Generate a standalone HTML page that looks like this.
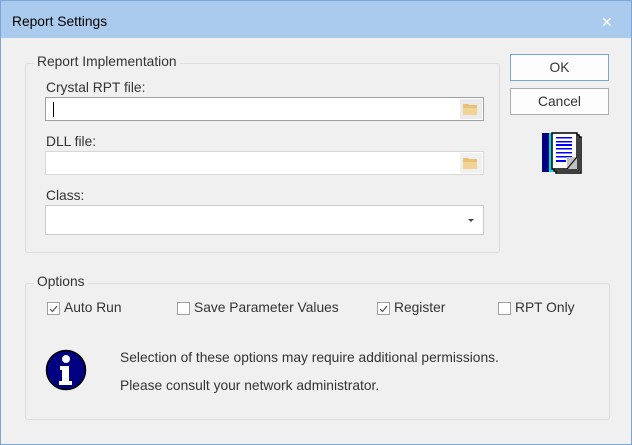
<!DOCTYPE html>
<html><head><style>
*{margin:0;padding:0;box-sizing:border-box}
body{width:632px;height:445px;background:#f0f0f0;font-family:"Liberation Sans",sans-serif;font-size:13.8px;color:#333;position:relative;overflow:hidden}
.win{position:absolute;left:0;top:0;width:632px;height:445px;border:1px solid #7aa6d6;background:#f0f0f0}
.title{position:absolute;left:0;top:0;width:630px;height:37px;background:#aacbee}
.title span{position:absolute;left:11px;top:13px;font-size:13.8px;color:#000}
.x{position:absolute;left:600px;top:13px;font-size:14px;color:#fff}
.grp{position:absolute;border:1px solid #dcdcdc;border-radius:3px}
.lg{position:absolute;top:-10px;left:8px;background:#f0f0f0;padding:0 3px;color:#333}
.lbl{position:absolute;color:#333}
.tb{position:absolute;background:#fff;border:1px solid #a0a0a0}
.tb.dis{border-color:#d8d8d8}
.fold{position:absolute;right:1px;top:1px;bottom:1px;width:22px;background:#ebebeb}
.btn{position:absolute;width:99px;border:1px solid #adadad;background:#fdfdfd;text-align:center;color:#333}
.cb{position:absolute;width:13px;height:13px;border:1px solid #a0a0a0;background:#fff}
.ct{position:absolute;color:#333}
</style></head><body><div class="win">
<div class="title"><span>Report Settings</span><div class="x">✕</div></div>
<div class="grp" style="left:24px;top:62px;width:475px;height:190px"><div class="lg">Report Implementation</div></div>
<div class="lbl" style="left:45px;top:79px">Crystal RPT file:</div>
<div class="tb" style="left:44px;top:96px;width:439px;height:24px"><div style="position:absolute;left:7px;top:4px;width:1px;height:15px;background:#000"></div><div class="fold"><svg width="22" height="20" viewBox="0 0 22 20"><path d="M3 5h5l1 1h8v10H3z" fill="#e8c078"/><path d="M3 9h14v7H3z" fill="#f2d394"/></svg></div></div>
<div class="lbl" style="left:45px;top:133px">DLL file:</div>
<div class="tb dis" style="left:44px;top:150px;width:439px;height:24px"><div class="fold" style="background:#f0f0f0"><svg width="22" height="20" viewBox="0 0 22 20"><path d="M3 5h5l1 1h8v10H3z" fill="#e8c078"/><path d="M3 9h14v7H3z" fill="#f2d394"/></svg></div></div>
<div class="lbl" style="left:45px;top:187px">Class:</div>
<div class="tb" style="left:44px;top:204px;width:439px;height:30px;border-color:#c8c8c8"><div style="position:absolute;right:9px;top:13px;width:0;height:0;border-left:3px solid transparent;border-right:3px solid transparent;border-top:3px solid #444"></div></div>
<div class="btn" style="left:509px;top:53px;height:27px;line-height:25px;border-color:#7aa6d6">OK</div>
<div class="btn" style="left:509px;top:87px;height:27px;line-height:25px">Cancel</div>
<svg style="position:absolute;left:540px;top:131px" width="42" height="42" viewBox="0 0 42 42"><rect x="1" y="1" width="7" height="39" fill="#000080"/><rect x="8" y="1" width="4" height="39" fill="#00e0e0"/><rect x="15" y="5" width="25" height="36" fill="#fff" stroke="#000" stroke-width="1.5"/><rect x="13" y="3" width="25" height="36" fill="#fff" stroke="#000" stroke-width="1.5"/><rect x="11" y="1" width="25" height="36" fill="#fff" stroke="#000" stroke-width="1.5"/><g fill="#0000ff"><rect x="15" y="5" width="16" height="1.5"/><rect x="15" y="9" width="16" height="1.5"/><rect x="15" y="12" width="16" height="2"/><rect x="15" y="16" width="16" height="1.5"/><rect x="15" y="20" width="16" height="1.5"/><rect x="15" y="24" width="16" height="1.5"/><rect x="15" y="28" width="10" height="2"/></g><path d="M26 25h10v12H26z" fill="#c0c0c0"/><path d="M26 37L36 25" stroke="#000"/></svg>
<div class="grp" style="left:24px;top:282px;width:585px;height:137px"><div class="lg">Options</div></div>
<div class="cb" style="left:46px;top:301px"><svg width="11" height="11" style="position:absolute;left:0;top:0"><path d="M2 6l2.5 2.5L9 3" stroke="#555" fill="none" stroke-width="1.2"/></svg></div><div class="ct" style="left:63px;top:299px">Auto Run</div>
<div class="cb" style="left:176px;top:301px"></div><div class="ct" style="left:193px;top:299px">Save Parameter Values</div>
<div class="cb" style="left:376px;top:301px"><svg width="11" height="11" style="position:absolute;left:0;top:0"><path d="M2 6l2.5 2.5L9 3" stroke="#555" fill="none" stroke-width="1.2"/></svg></div><div class="ct" style="left:393px;top:299px">Register</div>
<div class="cb" style="left:497px;top:301px"></div><div class="ct" style="left:514px;top:299px">RPT Only</div>
<svg style="position:absolute;left:44px;top:348px" width="42" height="42" viewBox="0 0 42 42"><circle cx="21" cy="21" r="19.5" fill="#000080" stroke="#000" stroke-width="1.5"/><circle cx="21" cy="10" r="4" fill="#fff"/><path d="M15 17h9v15h3v4H14v-4h3V21h-2z" fill="#fff"/></svg>
<div class="ct" style="left:119px;top:349px">Selection of these options may require additional permissions.</div>
<div class="ct" style="left:119px;top:377px">Please consult your network administrator.</div>
</div></body></html>
